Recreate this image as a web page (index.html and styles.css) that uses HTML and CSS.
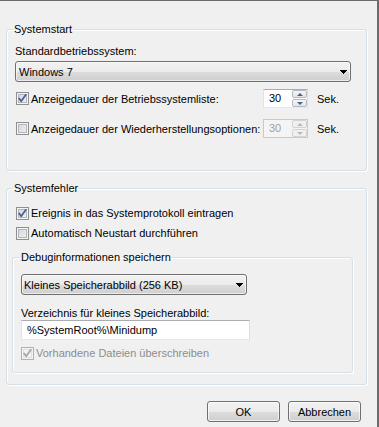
FILE: index.html
```html
<!DOCTYPE html>
<html lang="de">
<head>
<meta charset="utf-8">
<title>Starten und Wiederherstellen</title>
<link rel="stylesheet" href="styles.css">
</head>
<body>
<div class="dialog">
  <fieldset class="group g-start">
    <legend>Systemstart</legend>
    <div class="gbody start-body">
      <div class="label">Standardbetriebssystem:</div>
      <div class="select sel-os"><span class="sel-text">Windows 7</span><svg class="arrow" width="7" height="4" viewBox="0 0 7 4"><polygon points="0,0 7,0 4,4 3,4" fill="#000"/></svg></div>
      <div class="row row1">
        <div class="opt opt-wide"><span class="cb"><svg width="11" height="11" viewBox="0 0 11 11"><path d="M2.2 5.4 L4.2 8.3 L8.8 1.8" fill="none" stroke="#4a5c94" stroke-width="1.7" stroke-linecap="round" stroke-linejoin="round"/></svg></span><span>Anzeigedauer der Betriebssystemliste:</span></div>
        <div class="spin"><span class="spin-val">30</span><span class="spin-btns"><span class="sb"><span class="tri up"></span></span><span class="sb"><span class="tri down"></span></span></span></div>
        <span class="unit">Sek.</span>
      </div>
      <div class="row row2">
        <div class="opt opt-wide"><span class="cb"></span><span>Anzeigedauer der Wiederherstellungsoptionen:</span></div>
        <div class="spin spin-dis"><span class="spin-val">30</span><span class="spin-btns"><span class="sb"><span class="tri up"></span></span><span class="sb"><span class="tri down"></span></span></span></div>
        <span class="unit">Sek.</span>
      </div>
    </div>
  </fieldset>

  <fieldset class="group g-err">
    <legend>Systemfehler</legend>
    <div class="gbody err-body">
      <div class="opt opt-a"><span class="cb"><svg width="11" height="11" viewBox="0 0 11 11"><path d="M2.2 5.4 L4.2 8.3 L8.8 1.8" fill="none" stroke="#4a5c94" stroke-width="1.7" stroke-linecap="round" stroke-linejoin="round"/></svg></span><span>Ereignis in das Systemprotokoll eintragen</span></div>
      <div class="opt opt-b"><span class="cb"></span><span>Automatisch Neustart durchführen</span></div>
      <fieldset class="group g-debug">
        <legend>Debuginformationen speichern</legend>
        <div class="gbody debug-body">
          <div class="select sel-dump"><span class="sel-text">Kleines Speicherabbild (256 KB)</span><svg class="arrow" width="7" height="4" viewBox="0 0 7 4"><polygon points="0,0 7,0 4,4 3,4" fill="#000"/></svg></div>
          <div class="label lbl-dir">Verzeichnis für kleines Speicherabbild:</div>
          <div class="input">%SystemRoot%\Minidump</div>
          <div class="opt opt-dis"><span class="cb cb-dis"><svg width="11" height="11" viewBox="0 0 11 11"><path d="M2.2 5.4 L4.2 8.3 L8.8 1.8" fill="none" stroke="#a3a3a3" stroke-width="1.7" stroke-linecap="round" stroke-linejoin="round"/></svg></span><span>Vorhandene Dateien überschreiben</span></div>
        </div>
      </fieldset>
    </div>
  </fieldset>

  <div class="buttons">
    <button class="btn" type="button">OK</button>
    <button class="btn" type="button">Abbrechen</button>
  </div>
</div>
</body>
</html>
```
FILE: styles.css
```css
* { box-sizing: border-box; }
html, body { margin: 0; padding: 0; background: #f0f0f0; }
body {
  font-family: "Liberation Sans", Arial, sans-serif;
  font-size: 11px;
  line-height: 14px;
  color: #000;
}
.dialog {
  width: 379px;
  height: 427px;
  border-top: 1px solid #6b6b6b;
  border-right: 2px solid #6b6b6b;
  display: flex;
  flex-direction: column;
}

/* group boxes */
.group {
  margin: 0;
  padding: 0;
  min-width: 0;
  border: 1px solid #d5dfe5;
  border-radius: 3px;
  box-shadow: inset 1px 1px 0 #fff, 1px 1px 0 #fff;
}
.group > legend {
  margin-left: 6px;
  padding: 0 1px;
  line-height: 14px;
}
.g-start { margin: 21px 0 0 6px; width: 361px; }
.g-err { margin: 10px 0 0 6px; width: 361px; }
.g-debug { margin: 10px 0 0 0; width: 341px; }
.g-debug > legend { margin-left: 7px; }

.start-body { padding: 8px 0 32px 8px; }
.err-body { padding: 0 0 11px 5px; }
.debug-body { padding: 0 0 12px 8px; }

.label { line-height: 14px; }

/* select */
.select {
  height: 21px;
  border: 1px solid #707070;
  border-radius: 3px;
  background: linear-gradient(#f2f2f2 0%, #ebebeb 50%, #dddddd 51%, #cfcfcf 100%);
  box-shadow: inset 0 0 0 1px rgba(255,255,255,0.6);
  display: flex;
  align-items: center;
  justify-content: space-between;
  padding: 0 3px 0 3px;
}
.sel-os { margin-top: 3px; width: 336px; }
.sel-dump { margin-top: 10px; width: 226px; padding-left: 2px; }
.arrow { display: block; shape-rendering: crispEdges; }

/* rows */
.row { display: flex; align-items: center; height: 19px; margin-left: 1px; }
.row1 { margin-top: 7px; }
.row2 { margin-top: 11px; }
.opt { display: flex; align-items: center; white-space: nowrap; }
.opt-wide { width: 247px; }
.opt-a { margin: 11px 0 0 4px; height: 14px; }
.opt-b { margin: 6px 0 0 4px; height: 14px; }
.opt-dis { margin-top: 6px; height: 14px; color: #8d8d8d; }

/* checkbox */
.cb {
  width: 13px;
  height: 13px;
  flex: none;
  margin-right: 2px;
  border: 1px solid #8e8f8f;
  background: linear-gradient(135deg, #cfd3d8 0%, #f4f4f5 100%);
  box-shadow: inset 0 0 0 1px #f4f4f4, inset 0 0 0 2px #b3b7bd;
  display: flex;
  align-items: center;
  justify-content: center;
}
.cb svg { display: block; }
.cb-dis {
  border-color: #b1b1b1;
  background: #f4f4f4;
  box-shadow: inset 0 0 0 1px #f4f4f4, inset 0 0 0 2px #e0e0e0;
}

/* spinner */
.spin {
  width: 45px;
  height: 19px;
  border: 1px solid;
  border-color: #abadb3 #dbdfe6 #e3e9ef #e2e3ea;
  background: #fff;
  display: flex;
  justify-content: space-between;
  padding: 0 0 0 5px;
}
.spin-val { line-height: 17px; }
.spin-btns { width: 15px; display: flex; flex-direction: column; gap: 1px; padding: 0; }
.sb {
  flex: 1;
  border: 1px solid #b4b9bf;
  border-radius: 2px;
  background: linear-gradient(#f6f6f6, #e2e4e7);
  display: flex;
  align-items: center;
  justify-content: center;
}
.tri { width: 0; height: 0; border-left: 3px solid transparent; border-right: 3px solid transparent; }
.tri.up { border-bottom: 3px solid #4d6185; }
.tri.down { border-top: 3px solid #4d6185; }
.spin-dis { border-color: #c9c9c9; background: #f4f4f4; color: #a0a0a0; }
.spin-dis .sb { border-color: #d3d3d3; background: #f0f0f0; }
.spin-dis .tri.up { border-bottom-color: #b9b9b9; }
.spin-dis .tri.down { border-top-color: #b9b9b9; }
.unit { margin-left: 9px; }

/* text input */
.lbl-dir { margin-top: 11px; }
.input {
  width: 229px;
  height: 20px;
  border: 1px solid;
  border-color: #abadb3 #dbdfe6 #e3e9ef #e2e3ea;
  background: #fff;
  padding-left: 5px;
  line-height: 18px;
}

/* buttons */
.buttons {
  margin-top: 16px;
  padding-right: 16px;
  display: flex;
  justify-content: flex-end;
  gap: 8px;
}
.btn {
  width: 73px;
  height: 21px;
  padding: 0;
  font: inherit;
  color: #000;
  border: 1px solid #707070;
  border-radius: 3px;
  background: linear-gradient(#f2f2f2 0%, #ebebeb 50%, #dddddd 51%, #cfcfcf 100%);
  box-shadow: inset 0 0 0 1px rgba(255,255,255,0.7);
}
```
